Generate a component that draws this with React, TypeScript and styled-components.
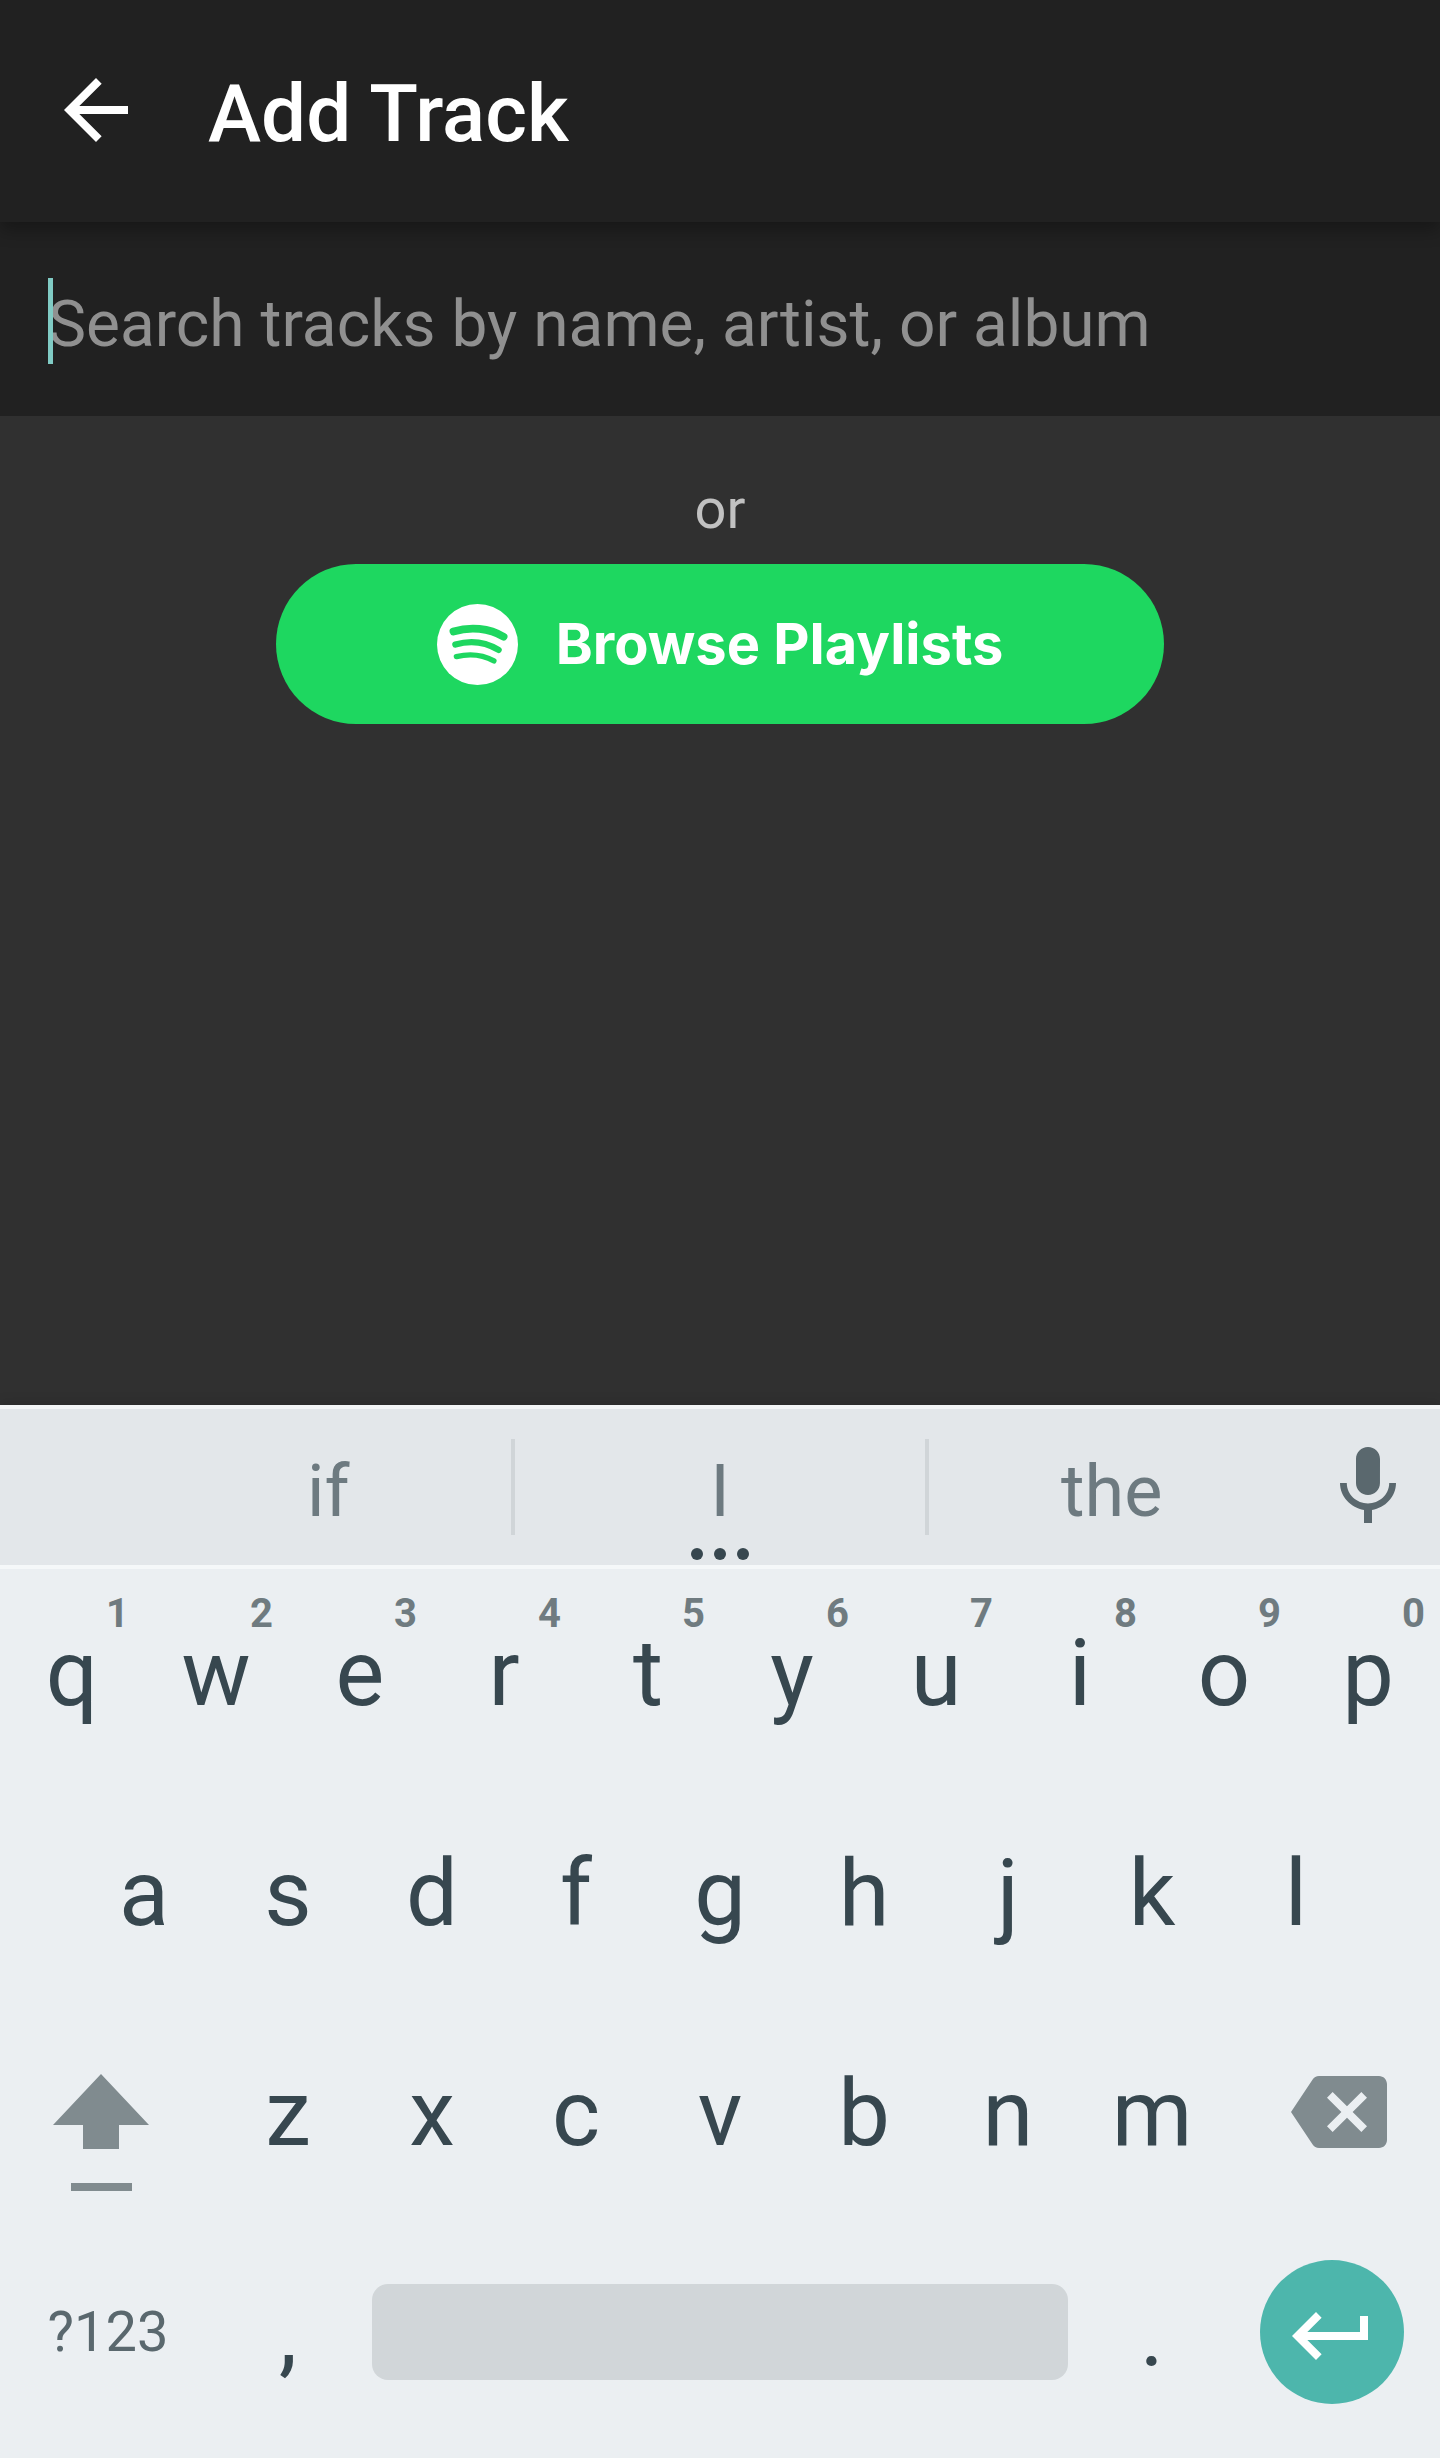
import React from "react";
import styled, { createGlobalStyle } from "styled-components";

const GlobalStyle = createGlobalStyle`
  *, *::before, *::after { box-sizing: border-box; }
  body { margin: 0; background: #303030; font-family: Roboto, "Noto Sans", sans-serif; }
  button, input { font-family: inherit; border: 0; margin: 0; padding: 0; background: none; }
  button { cursor: pointer; }
  svg { display: block; flex: none; }
`;

const Page = styled.div`
  display: flex;
  flex-direction: column;
  min-height: 100vh;
  background: #303030;
`;

const AppBar = styled.header`
  position: relative;
  z-index: 1;
  display: flex;
  gap: 64px;
  padding: 62px 48px 56px;
  background: #212121;
  box-shadow: 0 8px 16px rgba(0, 0, 0, 0.3);
`;

const BackButton = styled.button`
  height: 96px;
  color: #ffffff;
`;

const Title = styled.h1`
  margin: 0;
  color: #ffffff;
  font-size: 80px;
  font-weight: 500;
  line-height: 104px;
`;

const SearchBar = styled.div`
  position: relative;
  padding: 63px 48px 51px;
  background: #212121;
`;

const SearchInput = styled.input`
  display: block;
  width: 100%;
  height: 80px;
  color: #ffffff;
  font-size: 64px;
  line-height: 80px;
  outline: none;
  &::placeholder { color: #909090; opacity: 1; }
`;

const Caret = styled.span`
  position: absolute;
  left: 48px;
  top: 56px;
  width: 5px;
  height: 86px;
  background: #80cbc4;
`;

const Content = styled.main`
  flex: 1;
  display: flex;
  flex-direction: column;
  align-items: center;
  gap: 22px;
  padding: 60px 48px;
`;

const OrText = styled.p`
  margin: 0;
  color: #c1c1c1;
  font-size: 56px;
  line-height: 66px;
`;

const BrowseButton = styled.button`
  display: flex;
  align-items: center;
  justify-content: center;
  gap: 38px;
  width: 100%;
  max-width: 888px;
  height: 160px;
  border-radius: 80px;
  background: #1ed760;
  color: #ffffff;
  font-family: Inter, sans-serif;
  font-size: 56px;
  font-weight: 700;
  line-height: 72px;
`;

const Keyboard = styled.section`
  background: #ebeff2;
  box-shadow: 0 -2px 12px rgba(0, 0, 0, 0.12);
`;

const SuggestionStrip = styled.div`
  display: flex;
  align-items: stretch;
  height: 164px;
  padding-left: 144px;
  background: #e3e7ea;
  border-top: 4px solid #f3f5f6;
  border-bottom: 4px solid #f5f8f9;
`;

const Suggestion = styled.button<{ $grow: number }>`
  position: relative;
  flex: ${(p) => p.$grow} 1 0;
  padding-top: 10px;
  color: #6d7a80;
  font-size: 72px;
  line-height: 84px;
`;

const Divider = styled.span`
  flex: none;
  align-self: center;
  width: 4px;
  height: 96px;
  margin: 0 -2px;
  background: #d0d5d8;
`;

const MoreDots = styled.span`
  position: absolute;
  left: 0;
  right: 0;
  bottom: 5px;
  display: flex;
  justify-content: center;
  gap: 11px;
`;

const Dot = styled.span`
  width: 12px;
  height: 12px;
  border-radius: 50%;
  background: #37474f;
`;

const MicButton = styled.button`
  display: flex;
  align-items: center;
  justify-content: center;
  width: 144px;
  color: #5a686e;
`;

const Keys = styled.div`
  display: flex;
  flex-direction: column;
  gap: 40px;
  padding: 13px 0 36px;
`;

const KeyRow = styled.div`
  display: flex;
  justify-content: center;
  height: 180px;
`;

const LetterKey = styled.button`
  position: relative;
  flex: 0 0 10%;
  padding-top: 4px;
  color: #37474f;
  font-size: 92px;
  line-height: 108px;
`;

const Hint = styled.span`
  position: absolute;
  top: 8px;
  right: 15px;
  color: #6f7b80;
  font-size: 40px;
  font-weight: 700;
  line-height: 48px;
`;

const SideKey = styled.button<{ $side?: "left" | "right" }>`
  flex: 0 0 15%;
  display: flex;
  align-items: center;
  justify-content: center;
  padding-left: ${(p) => (p.$side === "right" ? 14 : 0)}px;
  padding-right: ${(p) => (p.$side === "left" ? 14 : 0)}px;
  color: #808b8f;
`;

const SymbolsKey = styled(SideKey)`
  color: #5a686e;
  font-size: 56px;
  line-height: 66px;
`;

const SpaceKey = styled.button`
  flex: 1;
  align-self: center;
  height: 96px;
  margin: 0 12px;
  border-radius: 16px;
  background: #d1d6d9;
`;

const EnterDisc = styled.span`
  display: flex;
  justify-content: center;
  width: 144px;
  height: 144px;
  padding-top: 28px;
  border-radius: 50%;
  background: #4db6ac;
  color: #ffffff;
`;

const Icon = ({ d }: { d: string }) => (
  <svg width="96" height="96" viewBox="0 0 24 24" fill="currentColor" aria-hidden="true">
    <path d={d} />
  </svg>
);

const ARROW_BACK = "M20 11H7.83l5.59-5.59L12 4l-8 8 8 8 1.41-1.41L7.83 13H20v-2z";
const MIC =
  "M12 14c1.66 0 2.99-1.34 2.99-3L15 5c0-1.66-1.34-3-3-3S9 3.34 9 5v6c0 1.66 1.34 3 3 3zm5.3-3c0 3-2.54 5.1-5.3 5.1S6.7 14 6.7 11H5c0 3.41 2.72 6.23 6 6.72V21h2v-3.28c3.28-.48 6-3.3 6-6.72h-1.7z";
const BACKSPACE =
  "M22 3H7c-.69 0-1.23.35-1.59.88L0 12l5.41 8.11c.36.53.9.89 1.59.89h15c1.1 0 2-.9 2-2V5c0-1.1-.9-2-2-2zm-3 12.59L17.59 17 14 13.41 10.41 17 9 15.59 12.59 12 9 8.41 10.41 7 14 10.59 17.59 7 19 8.41 15.41 12 19 15.59z";
const RETURN = "M19 7v4H5.83l3.58-3.59L8 6l-6 6 6 6 1.41-1.41L5.83 13H21V7h-2z";

const SpotifyLogo = () => (
  <svg width="81" height="81" viewBox="46 42 242 242" fill="none" aria-hidden="true">
    <circle cx="167" cy="163" r="121" fill="#ffffff" />
    <g stroke="#1ed760" strokeLinecap="round">
      <path d="M95 124C145 109 202 113 245 140" strokeWidth="23" />
      <path d="M101 163C145 150 190 155 230 179" strokeWidth="19" />
      <path d="M104 199C142 190 180 192 216 212" strokeWidth="16" />
    </g>
  </svg>
);

const ShiftIcon = () => (
  <svg width="96" height="160" viewBox="0 -42 96 160" fill="currentColor" aria-hidden="true">
    <path d="M48 0L96 51H66V75H30V51H0Z" />
    <path d="M18 109H79V117H18Z" />
  </svg>
);

const topRow = "qwertyuiop".split("");
const homeRow = "asdfghjkl".split("");
const bottomRow = "zxcvbnm".split("");

const Letters = ({ letters, hints }: { letters: string[]; hints?: string }) => (
  <>
    {letters.map((letter, i) => (
      <LetterKey key={letter} type="button">
        {letter}
        {hints && <Hint>{hints[i]}</Hint>}
      </LetterKey>
    ))}
  </>
);

export default function App() {
  return (
    <>
      <GlobalStyle />
      <Page>
        <AppBar>
          <BackButton type="button" aria-label="Back">
            <Icon d={ARROW_BACK} />
          </BackButton>
          <Title>Add Track</Title>
        </AppBar>
        <SearchBar>
          <Caret />
          <SearchInput
            type="text"
            aria-label="Search tracks"
            placeholder="Search tracks by name, artist, or album"
          />
        </SearchBar>
        <Content>
          <OrText>or</OrText>
          <BrowseButton type="button">
            <SpotifyLogo />
            Browse Playlists
          </BrowseButton>
        </Content>
        <Keyboard aria-label="Keyboard">
          <SuggestionStrip>
            <Suggestion type="button" $grow={8}>if</Suggestion>
            <Divider />
            <Suggestion type="button" $grow={9}>
              I
              <MoreDots>
                <Dot />
                <Dot />
                <Dot />
              </MoreDots>
            </Suggestion>
            <Divider />
            <Suggestion type="button" $grow={8}>the</Suggestion>
            <MicButton type="button" aria-label="Voice input">
              <Icon d={MIC} />
            </MicButton>
          </SuggestionStrip>
          <Keys>
            <KeyRow>
              <Letters letters={topRow} hints="1234567890" />
            </KeyRow>
            <KeyRow>
              <Letters letters={homeRow} />
            </KeyRow>
            <KeyRow>
              <SideKey type="button" aria-label="Shift" $side="left">
                <ShiftIcon />
              </SideKey>
              <Letters letters={bottomRow} />
              <SideKey type="button" aria-label="Backspace" $side="right">
                <Icon d={BACKSPACE} />
              </SideKey>
            </KeyRow>
            <KeyRow>
              <SymbolsKey type="button">?123</SymbolsKey>
              <LetterKey type="button">,</LetterKey>
              <SpaceKey type="button" aria-label="Space" />
              <LetterKey type="button">.</LetterKey>
              <SideKey type="button" aria-label="Enter">
                <EnterDisc>
                  <Icon d={RETURN} />
                </EnterDisc>
              </SideKey>
            </KeyRow>
          </Keys>
        </Keyboard>
      </Page>
    </>
  );
}
